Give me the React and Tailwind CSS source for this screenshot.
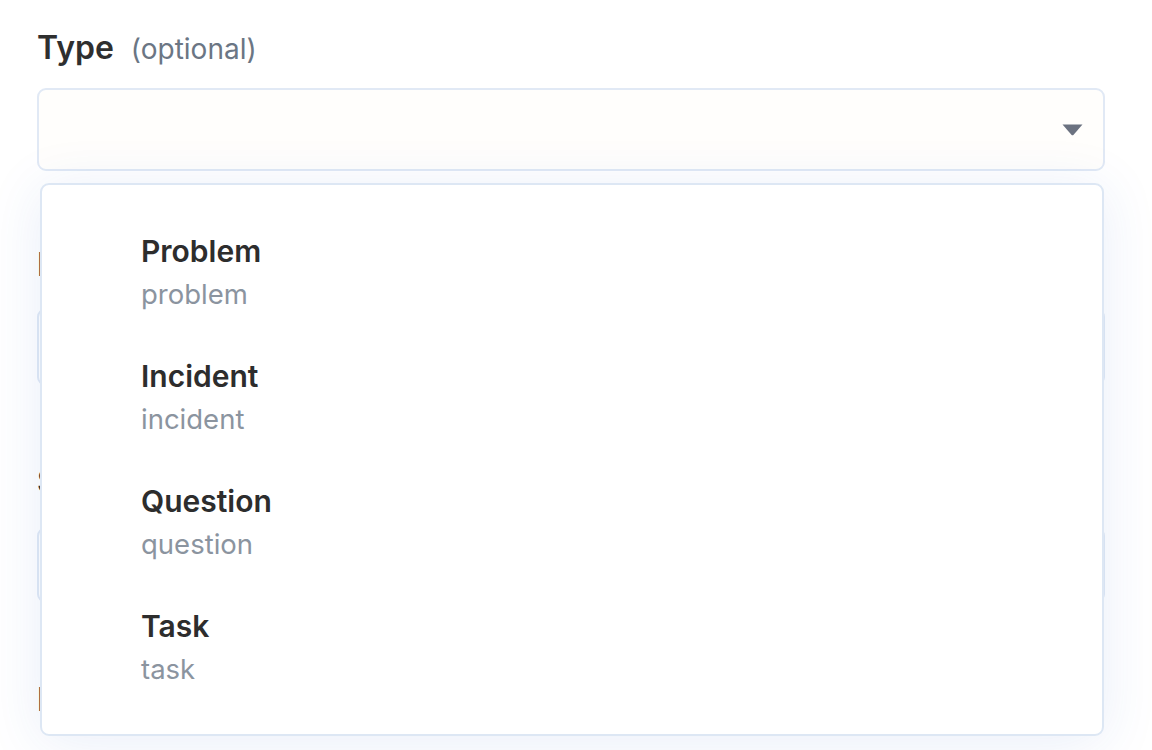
import React from "react";

const items = [
  { label: "Problem", value: "problem" },
  { label: "Incident", value: "incident" },
  { label: "Question", value: "question" },
  { label: "Task", value: "task" },
];

function Field({ label, className, inputClass, showInput = true }) {
  return (
    <div className={"flex flex-col " + className}>
      <div className="flex items-baseline h-[40px] leading-[40px]">
        <span className="text-[32px] font-semibold text-[#2f2f2f]">{label}</span>
      </div>
      {showInput && (
        <div className={"rounded-[9px] border-2 border-[#e1e9f5] bg-white " + inputClass} />
      )}
    </div>
  );
}

export default function App() {
  return (
    <div
      className="w-[1152px] h-[750px] bg-white overflow-hidden"
      style={{ fontFamily: "Inter, 'Noto Sans', sans-serif" }}
    >
      <div className="ml-[37px] w-[1068px] pt-[28px] flex flex-col">
        <div className="relative flex flex-col">
          <div className="flex items-baseline h-[40px] leading-[40px] gap-[17px]">
            <span className="text-[32px] font-semibold text-[#2f2f2f]">Type</span>
            <span className="text-[28px] text-[#6b7684]">(optional)</span>
          </div>
          <div className="mt-[20px] h-[83px] rounded-[9px] border-2 border-[#e1e9f5] bg-[#fffefc] flex items-center justify-end pr-[20px]">
            <svg width="21" height="12" viewBox="0 0 21 12" className="mt-[1px]">
              <path d="M0.5 0.5 H20.5 L11.6 10.8 Q10.5 11.9 9.4 10.8 Z" fill="#6b7280" />
            </svg>
          </div>

          <div className="absolute z-10 left-[3px] top-[155px] w-[1064px] h-[553px] rounded-[9px] border-2 border-[#dde7f4] bg-white shadow-[0_6px_56px_rgba(40,90,200,0.10)] pt-[46px] pl-[99px] flex flex-col gap-[42px]">
            {items.map((it) => (
              <div key={it.value} className="flex flex-col">
                <span className="text-[30px] leading-[40px] font-semibold text-[#2d2d2d]">
                  {it.label}
                </span>
                <span className="mt-[3px] text-[27.5px] leading-[40px] text-[#8b949f]">
                  {it.value}
                </span>
              </div>
            ))}
          </div>
        </div>

        <Field label="Priority" className="mt-[74px]" inputClass="mt-[23px] h-[78px]" />
        <Field label="Status" className="mt-[76px]" inputClass="mt-[25px] h-[76px]" />
        <Field label="Due date" className="mt-[77px]" showInput={false} />
      </div>
    </div>
  );
}
